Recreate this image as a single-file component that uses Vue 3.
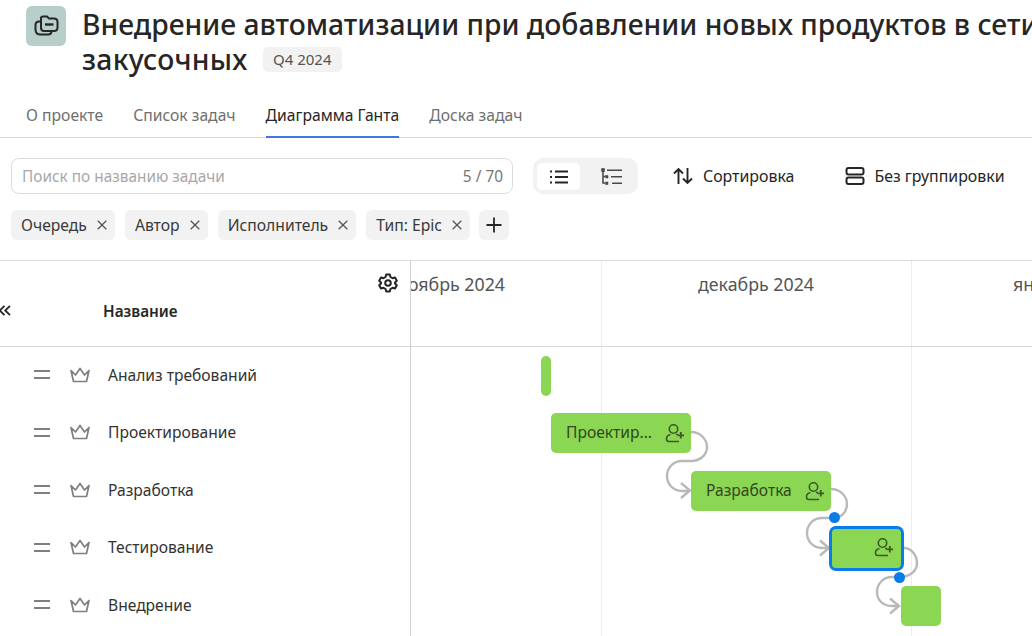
<script setup>
const tabs = [
  { label: 'О проекте' },
  { label: 'Список задач' },
  { label: 'Диаграмма Ганта', active: true },
  { label: 'Доска задач' },
]
const chips = ['Очередь', 'Автор', 'Исполнитель', 'Тип: Epic']
const rows = ['Анализ требований', 'Проектирование', 'Разработка', 'Тестирование', 'Внедрение']
</script>

<template>
  <div class="page">
    <header class="head">
      <div class="logo">
        <svg width="26" height="26" viewBox="0 0 26 26" fill="none" stroke="#262626" stroke-width="2">
          <path d="M8 6.500V5.500C8 4.400 8.900 3.500 10 3.500H14L16 5.500H21C23.200 5.500 24.500 7 24.500 9V14.500C24.500 16.700 23 18 21 18H11C9 18 8 16.700 8 14.500V6.500Z" />
          <path d="M8 8.500H6C3.800 8.500 2.500 10 2.500 12V16.500C2.500 19.500 4.500 21.500 7.500 21.500H15C17 21.500 18.500 20 18.500 18" />
          <path d="M12 11.500H20.500" stroke-width="2.400" />
        </svg>
      </div>
      <h1 class="title">
        <span class="title-line">Внедрение автоматизации при добавлении новых продуктов в сети</span>
        <span class="title-second"><span class="second-word">закусочных</span> <span class="tag">Q4 2024</span></span>
      </h1>
    </header>

    <nav class="tabs">
      <a v-for="t in tabs" :key="t.label" class="tab" :class="{ active: t.active }">{{ t.label }}</a>
    </nav>

    <section class="toolbar">
      <div class="search">
        <span class="placeholder">Поиск по названию задачи</span>
        <span class="count">5 / 70</span>
      </div>
      <div class="segment">
        <div class="seg on">
          <svg width="18" height="14" viewBox="0 0 18 14" fill="none" stroke="#262626" stroke-width="1.800">
            <path d="M5 1.500H18M5 7H18M5 12.500H18" />
            <path d="M0 1.500H2M0 7H2M0 12.500H2" />
          </svg>
        </div>
        <div class="seg">
          <svg width="21" height="18" viewBox="0 0 21 18" fill="none" stroke="#4a4a4a" stroke-width="1.600">
            <path d="M2 2V15H4M2 8.500H4" />
            <path d="M0.500 0.500H3.500V3.500H0.500ZM4.500 7.500H7V10H4.500ZM4.500 14H7V16.500H4.500Z" fill="#4a4a4a" stroke-width="0.600" />
            <path d="M6 2.300H21M10 8.800H21M11 15.200H21" />
          </svg>
        </div>
      </div>
      <button class="action sort">
        <svg width="20" height="18" viewBox="0 0 20 18" fill="none" stroke="#262626" stroke-width="1.900">
          <path d="M5.500 17V2M1 6.500L5.500 2L10 6.500" />
          <path d="M14.500 1V16M10 11.500L14.500 16L19 11.500" />
        </svg>
        Сортировка
      </button>
      <button class="action group">
        <svg width="20" height="18" viewBox="0 0 20 18" fill="none" stroke="#262626" stroke-width="2">
          <rect x="1.500" y="1" width="17" height="6.500" rx="2" />
          <rect x="1.500" y="10.500" width="17" height="6.500" rx="2" />
        </svg>
        Без группировки
      </button>
    </section>

    <section class="chips">
      <span v-for="c in chips" :key="c" class="chip">
        {{ c }}
        <svg width="10" height="10" viewBox="0 0 10 10" stroke="#555" stroke-width="1.300">
          <path d="M0.700 0.700L9.300 9.300M9.300 0.700L0.700 9.300" />
        </svg>
      </span>
      <span class="chip plus">
        <svg width="16" height="16" viewBox="0 0 16 16" stroke="#262626" stroke-width="1.800">
          <path d="M8 0.500V15.500M0.500 8H15.500" />
        </svg>
      </span>
    </section>

    <section class="gantt">
      <aside class="side">
        <div class="side-head">
          <svg class="gear" width="20" height="20" viewBox="0 0 20 20" fill="none" stroke="#262626" stroke-width="2" stroke-linejoin="round">
            <path d="M8.200 1.500H11.800L12.400 4L14.500 5.200L17 4.500L18.800 7.700L17 9.400V10.600L18.800 12.300L17 15.500L14.500 14.800L12.400 16L11.800 18.500H8.200L7.600 16L5.500 14.800L3 15.500L1.200 12.300L3 10.600V9.400L1.200 7.700L3 4.500L5.500 5.200L7.600 4Z" />
            <circle cx="10" cy="10" r="2.800" />
          </svg>
          <svg class="collapse" width="11" height="12" viewBox="0 0 11 12" fill="none" stroke="#262626" stroke-width="1.800">
            <path d="M4.500 0.800L-0.300 5.500L4.500 10.200M10 0.800L5.200 5.500L10 10.200" />
          </svg>
          <span class="name-head">Название</span>
        </div>
        <div class="rows">
          <div v-for="r in rows" :key="r" class="row">
            <svg class="drag" width="16" height="9" viewBox="0 0 16 9" stroke="#7f7f7f" stroke-width="2">
              <path d="M0 1H16M0 8H16" />
            </svg>
            <svg class="crown" width="20" height="16" viewBox="0 0 20 16" fill="none" stroke="#7f7f7f" stroke-width="1.700" stroke-linejoin="round">
              <path d="M1 3.500L5.500 8L10 1.500L14.500 8L19 3.500L16.500 14.500H3.500Z" />
            </svg>
            <span class="row-label">{{ r }}</span>
          </div>
        </div>
      </aside>

      <div class="chart">
        <div class="gridline g1"></div>
        <div class="gridline g2"></div>
        <div class="hline"></div>
        <span class="month m1">ноябрь 2024</span>
        <span class="month m2">декабрь 2024</span>
        <span class="month m3">январь 2025</span>

        <svg class="links" width="621" height="375" viewBox="411 261 621 375" fill="none" stroke="#b9b9b9" stroke-width="2.400">
          <path d="M691 432C700 432 707 439 707 447C707 455 700 461 691 461H682C673 461 667 468 667 476C667 484 673 491 682 491H690M681 483L690 490.500L681 498" />
          <path d="M831 489C840 489 847 496 847 504C847 512 841 518 834 518H822C813 518 807 525 807 533C807 541 813 548 822 548H829M820 540.500L829 548L820 555.500" />
          <path d="M904 548C911 548 917 555 917 563C917 571 910 577 899 577H892C883 577 877 584 877 592C877 600 883 606 892 606H899M890 598.500L899 606L890 613.500" />
        </svg>

        <div class="bar b1"></div>
        <div class="bar b2"><span>Проектир...</span><svg class="assign" width="20" height="20" viewBox="0 0 20 20" fill="none" stroke="#3c5a27" stroke-width="1.600"><circle cx="8.500" cy="6" r="4.200" /><path d="M5.500 11.500C3 12 1.500 14 1.500 16C1.500 17.500 2.500 18.500 4 18.500H14" /><path d="M11 11.500H13" /><path d="M15.800 9V15.600M12.500 12.300H19" stroke-width="1.800" /></svg></div>
        <div class="bar b3"><span>Разработка</span><svg class="assign" width="20" height="20" viewBox="0 0 20 20" fill="none" stroke="#3c5a27" stroke-width="1.600"><circle cx="8.500" cy="6" r="4.200" /><path d="M5.500 11.500C3 12 1.500 14 1.500 16C1.500 17.500 2.500 18.500 4 18.500H14" /><path d="M11 11.500H13" /><path d="M15.800 9V15.600M12.500 12.300H19" stroke-width="1.800" /></svg></div>
        <div class="bar b4"><svg class="assign" width="20" height="20" viewBox="0 0 20 20" fill="none" stroke="#3c5a27" stroke-width="1.600"><circle cx="8.500" cy="6" r="4.200" /><path d="M5.500 11.500C3 12 1.500 14 1.500 16C1.500 17.500 2.500 18.500 4 18.500H14" /><path d="M11 11.500H13" /><path d="M15.800 9V15.600M12.500 12.300H19" stroke-width="1.800" /></svg></div>
        <div class="bar b5"></div>
        <div class="dot d1"></div>
        <div class="dot d2"></div>
      </div>
    </section>
  </div>
</template>

<style>
html, body { margin: 0; background: #fff; overflow: hidden; }
</style>

<style scoped>
.page {
  width: 1032px;
  height: 636px;
  overflow: hidden;
  font-family: "Noto Sans", "Liberation Sans", sans-serif;
  color: #262626;
  display: flex;
  flex-direction: column;
}
.head {
  display: flex;
  height: 96px;
  padding: 6px 0 0 26px;
  box-sizing: border-box;
  gap: 16px;
  width: 1200px;
  flex: none;
}
.logo {
  width: 40px;
  height: 40px;
  border-radius: 6px;
  background: #b7cecb;
  display: flex;
  align-items: center;
  justify-content: center;
  flex: none;
}
.title {
  margin: 0;
  font-size: 28.300px;
  line-height: 35px;
  font-weight: 500;
  margin-top: 1px;
}
.title-line, .title-second { display: block; white-space: nowrap; }
.second-word { letter-spacing: 0.300px; }
.tag {
  display: inline-block;
  vertical-align: 5px;
  height: 25px;
  line-height: 25px;
  padding: 0 10px;
  margin-left: 8px;
  background: #f2f2f2;
  border-radius: 5px;
  font-size: 15px;
  font-weight: 400;
  color: #555;
}
.tabs {
  display: flex;
  gap: 30px;
  padding-left: 26px;
  height: 42px;
  box-sizing: border-box;
  border-bottom: 1px solid #d9d9d9;
  flex: none;
}
.tab {
  font-size: 15.700px;
  line-height: 39px;
  color: #6f6f6f;
  height: 42px;
  box-sizing: border-box;
}
.tab.active { color: #262626; border-bottom: 2px solid #3f78e0; }
.toolbar {
  display: flex;
  align-items: center;
  height: 36px;
  margin-top: 20px;
  padding-left: 11px;
  flex: none;
  width: 1200px;
}
.search {
  width: 502px;
  height: 36px;
  box-sizing: border-box;
  border: 1px solid #dcdcdc;
  border-radius: 8px;
  display: flex;
  justify-content: space-between;
  align-items: center;
  padding: 0 9px 0 10px;
  font-size: 15.400px;
}
.placeholder { color: #a8a8a8; }
.count { color: #777; }
.segment {
  margin-left: 20px;
  width: 105px;
  height: 36px;
  background: #f2f2f2;
  border-radius: 10px;
  box-sizing: border-box;
  padding: 4px;
  display: flex;
}
.seg {
  width: 45px;
  height: 27px;
  margin-top: 1px;
  border-radius: 5px;
  display: flex;
  align-items: center;
  justify-content: center;
}
.seg + .seg { margin-left: 8px; width: 48px; }
.seg.on { background: #fff; }
.action {
  all: unset;
  display: flex;
  align-items: center;
  gap: 10px;
  font-size: 15.900px;
  color: #262626;
}
.sort { margin-left: 35px; }
.group { margin-left: 51px; gap: 9px; }
.chips {
  display: flex;
  gap: 10px;
  margin-top: 16px;
  padding-left: 11px;
  flex: none;
}
.chip {
  height: 30px;
  box-sizing: border-box;
  padding: 0 8px 0 10px;
  display: flex;
  align-items: center;
  gap: 10px;
  background: #f2f2f2;
  border-radius: 6px;
  font-size: 15.700px;
  line-height: 28px;
  padding-bottom: 1px;
  color: #3a3a3a;
}
.chip.plus { width: 30px; padding: 0; justify-content: center; margin-left: -1px; }
.gantt {
  display: flex;
  margin-top: 20px;
  border-top: 1px solid #d9d9d9;
  flex: 1;
  min-height: 0;
}
.side {
  width: 411px;
  box-sizing: border-box;
  border-right: 1px solid #cfcfcf;
  flex: none;
}
.side-head {
  height: 85px;
  border-bottom: 1px solid #d9d9d9;
  position: relative;
}
.gear { position: absolute; left: 378px; top: 12px; }
.collapse { position: absolute; left: 0; top: 44px; }
.name-head {
  position: absolute;
  left: 103px;
  top: 40px;
  font-size: 15.300px;
  font-weight: 600;
}
.rows { margin-top: -1px; }
.row {
  height: 57.500px;
  display: flex;
  align-items: center;
  padding-left: 34px;
}
.crown { margin-left: 20px; }
.row-label { margin-left: 18px; font-size: 15.600px; color: #333; }
.chart {
  position: relative;
  flex: 1;
  overflow: hidden;
}
.gridline { position: absolute; top: 0; bottom: 0; width: 1px; background: #ececec; }
.g1 { left: 190px; }
.g2 { left: 500px; }
.hline { position: absolute; left: 0; right: 0; top: 85px; height: 1px; background: #d9d9d9; }
.month { position: absolute; top: 11px; font-size: 17.800px; color: #555; white-space: nowrap; }
.m1 { left: -14px; }
.m2 { left: 287px; }
.m3 { left: 602px; }
.links { position: absolute; left: 0; top: 0; }
.bar {
  position: absolute;
  background: #8bd653;
  border-radius: 5px;
  box-sizing: border-box;
  display: flex;
  align-items: center;
  font-size: 15.600px;
  color: #33461f;
}
.bar span { margin-left: 15px; margin-bottom: 2px; white-space: nowrap; }
.assign { position: absolute; right: 6px; top: 10px; }
.b1 { left: 130px; top: 95px; width: 10px; height: 40px; }
.b2 { left: 140px; top: 152px; width: 140px; height: 40px; }
.b3 { left: 280px; top: 210px; width: 140px; height: 40px; }
.b4 { left: 418px; top: 265px; width: 75px; height: 45px; border: 3px solid #0a7cea; border-radius: 7px; }
.b4 .assign { right: 7px; top: 8px; }
.b5 { left: 490px; top: 325px; width: 40px; height: 40px; }
.dot { position: absolute; width: 11px; height: 11px; border-radius: 50%; background: #0a7cea; }
.d1 { left: 417.500px; top: 251px; }
.d2 { left: 482.500px; top: 311px; }
</style>
